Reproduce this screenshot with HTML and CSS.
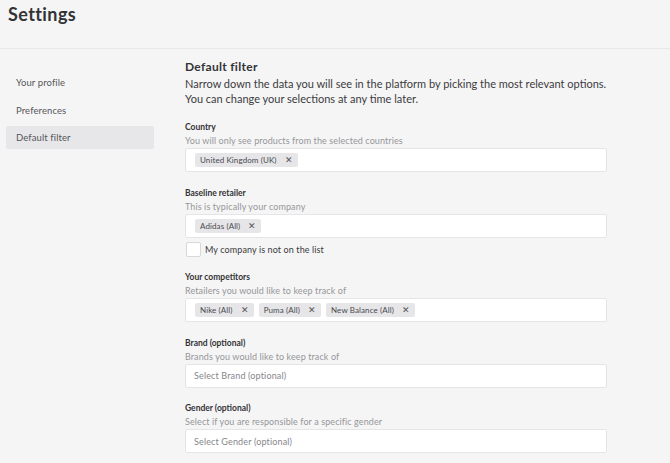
FILE: index.html
```html
<!DOCTYPE html>
<html>
<head>
<meta charset="utf-8">
<link rel="stylesheet" href="styles.css">
</head>
<body>
<header class="header"><h1 class="title">Settings</h1></header>
<div class="layout">
  <nav class="sidebar">
    <div class="nav-item">Your profile</div>
    <div class="nav-item">Preferences</div>
    <div class="nav-item active">Default filter</div>
  </nav>
  <main class="main">
    <h2 class="heading">Default filter</h2>
    <p class="intro">Narrow down the data you will see in the platform by picking the most relevant options.<br>You can change your selections at any time later.</p>

    <div class="field">
      <div class="label">Country</div>
      <div class="help">You will only see products from the selected countries</div>
      <div class="box"><span class="tag">United Kingdom (UK)<span class="x">✕</span></span></div>
    </div>

    <div class="field">
      <div class="label">Baseline retailer</div>
      <div class="help">This is typically your company</div>
      <div class="box"><span class="tag">Adidas (All)<span class="x">✕</span></span></div>
      <label class="check"><span class="checkbox"></span>My company is not on the list</label>
    </div>

    <div class="field">
      <div class="label">Your competitors</div>
      <div class="help">Retailers you would like to keep track of</div>
      <div class="box">
        <span class="tag">Nike (All)<span class="x">✕</span></span>
        <span class="tag">Puma (All)<span class="x">✕</span></span>
        <span class="tag">New Balance (All)<span class="x">✕</span></span>
      </div>
    </div>

    <div class="field">
      <div class="label">Brand (optional)</div>
      <div class="help">Brands you would like to keep track of</div>
      <div class="box"><span class="placeholder">Select Brand (optional)</span></div>
    </div>

    <div class="field">
      <div class="label">Gender (optional)</div>
      <div class="help">Select if you are responsible for a specific gender</div>
      <div class="box"><span class="placeholder">Select Gender (optional)</span></div>
    </div>
  </main>
</div>
</body>
</html>
```
FILE: styles.css
```css
* { box-sizing: border-box; }
html, body { margin: 0; padding: 0; }
body {
  background: #f5f5f5;
  font-family: Lato, "Open Sans", sans-serif;
  color: #3b3b3e;
  width: 670px;
  height: 463px;
  overflow: hidden;
}
.header {
  height: 49px;
  border-bottom: 1px solid #e8e8e8;
  padding: 3px 8px 0;
}
.title {
  margin: 0;
  font-size: 18px;
  line-height: 22px;
  font-weight: 700;
  letter-spacing: 0.4px;
  color: #333336;
}
.layout {
  display: flex;
  gap: 31px;
}
.sidebar {
  width: 154px;
  flex: none;
  padding: 22px 0 0 6px;
  display: flex;
  flex-direction: column;
  gap: 4.5px;
}
.nav-item {
  height: 23px;
  line-height: 23px;
  padding-left: 10px;
  font-size: 9.5px;
  color: #555559;
  border-radius: 2px;
  letter-spacing: 0.1px;
}
.nav-item.active {
  background: #e7e7ea;
}
.main {
  width: 422px;
  padding-top: 10px;
}
.heading {
  margin: 0;
  font-size: 12px;
  line-height: 16px;
  font-weight: 700;
  letter-spacing: 0.3px;
  color: #333336;
}
.intro {
  margin: 1px 0 14px;
  font-size: 11px;
  line-height: 15px;
  white-space: nowrap;
  color: #3b3b3e;
}
.field {
  margin-bottom: 13.5px;
}
.label {
  font-size: 8.5px;
  font-weight: 700;
  line-height: 14px;
  color: #333336;
}
.help {
  font-size: 9px;
  line-height: 14px;
  color: #96969b;
  letter-spacing: 0.1px;
}
.box {
  height: 24px;
  background: #fff;
  border: 1px solid #e5e5e7;
  border-radius: 2px;
  padding: 0 9px;
  display: flex;
  align-items: center;
  gap: 5px;
}
.tag {
  display: inline-flex;
  align-items: center;
  height: 14px;
  background: #e6e6e9;
  border-radius: 2px;
  padding: 0 5px;
  font-size: 8px;
  color: #4a4a4e;
  letter-spacing: 0.1px;
}
.x {
  margin-left: 8px;
  font-size: 8.5px;
  color: #555;
}
.placeholder {
  font-size: 9px;
  color: #86868b;
  letter-spacing: 0.15px;
  margin-left: -1px;
}
.check {
  display: flex;
  align-items: center;
  margin-top: 4px;
  font-size: 9px;
  color: #3b3b3e;
  letter-spacing: 0.1px;
}
.checkbox {
  width: 15px;
  height: 15px;
  background: #fff;
  border: 1px solid #d8d8db;
  border-radius: 2px;
  margin: 0 4px 0 1px;
}
```
